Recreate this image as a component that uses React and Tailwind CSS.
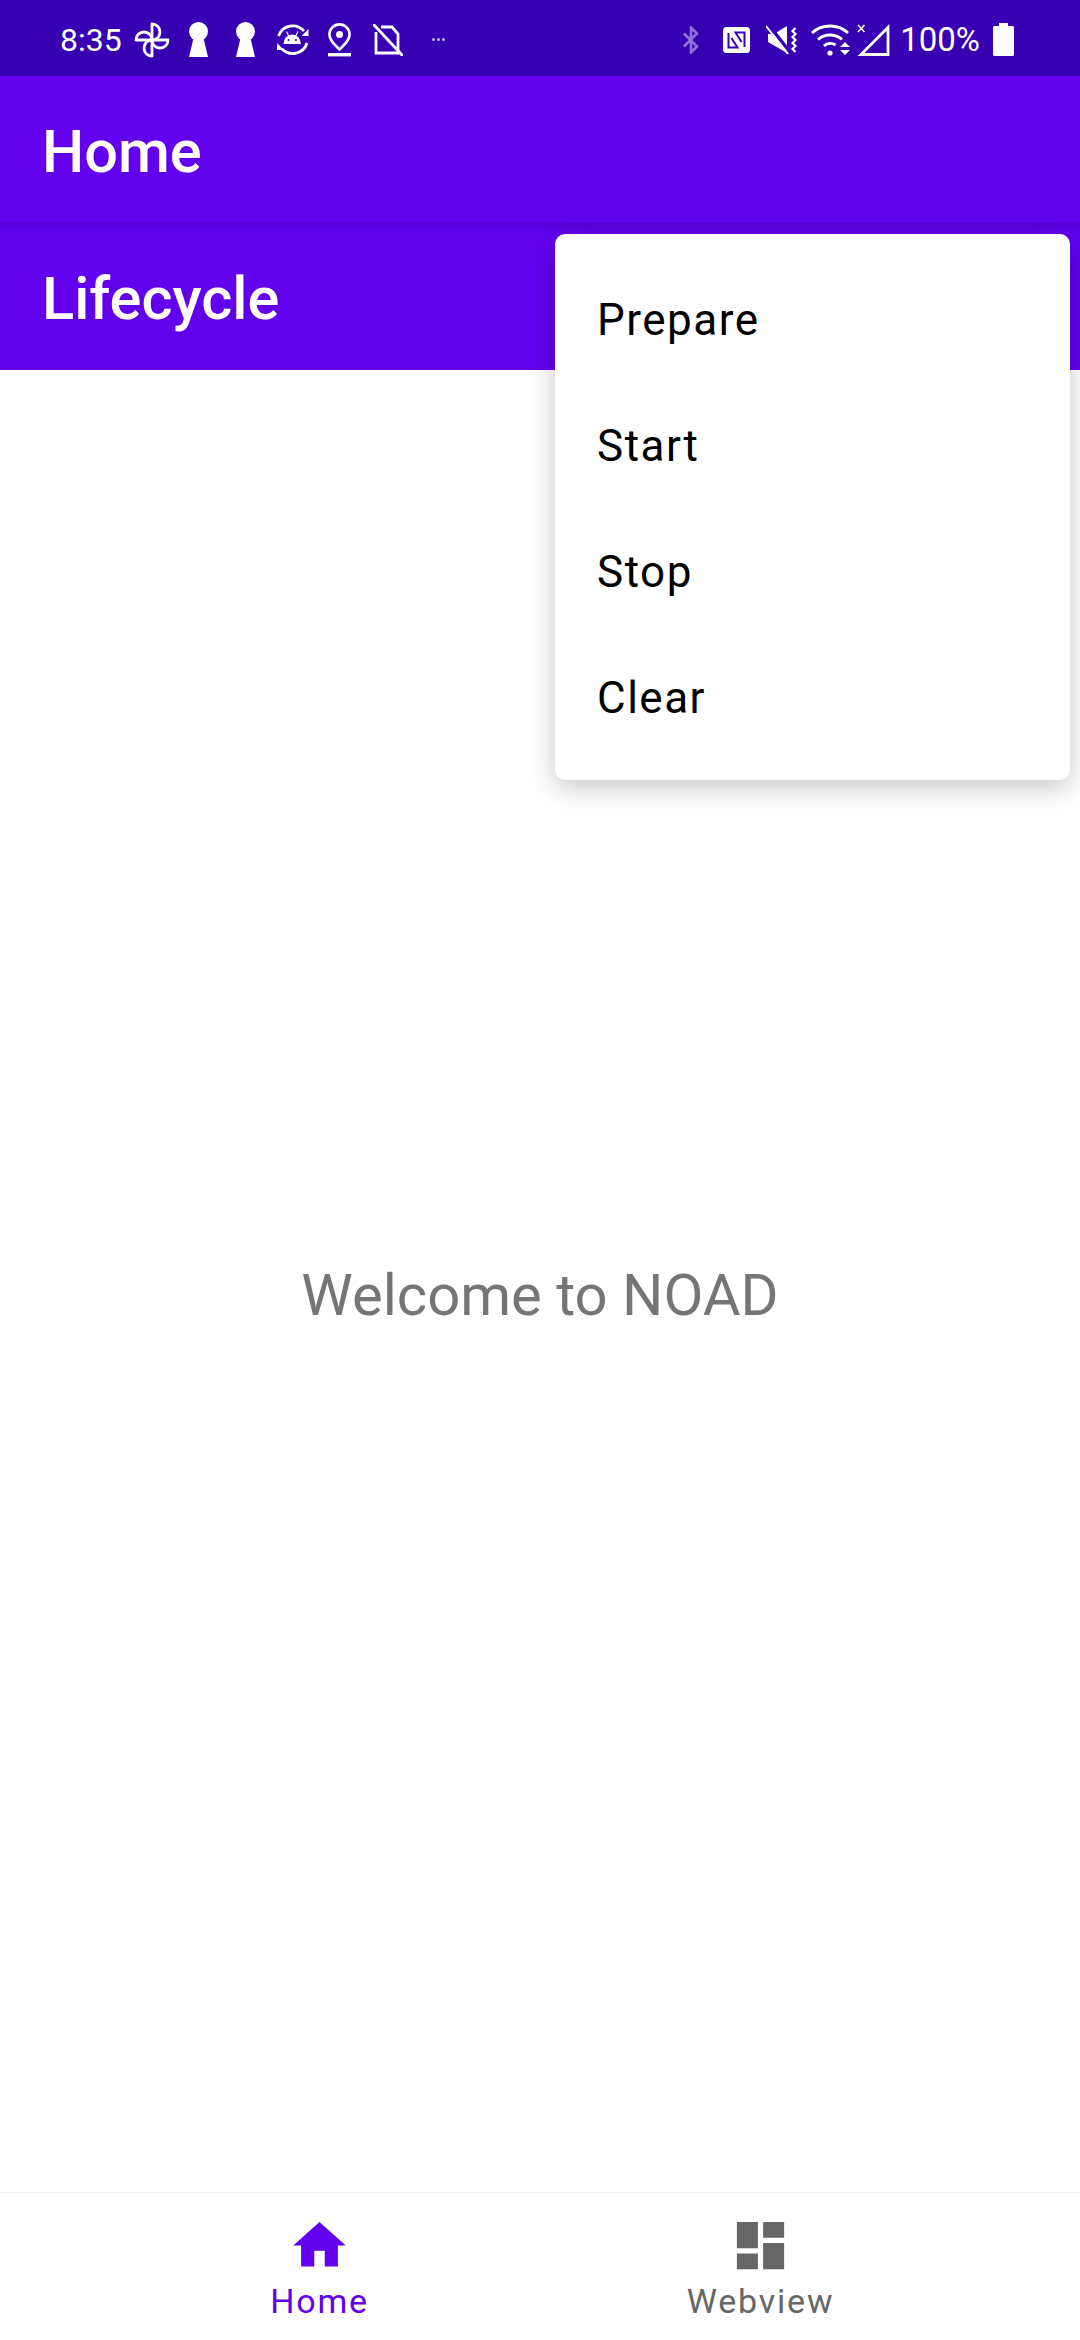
import React from 'react';

const roboto = "font-['Roboto',sans-serif]";

function Pinwheel() {
    return (
        <svg width="36" height="36" viewBox="0 0 36 36" fill="none" stroke="white" strokeWidth="2.8" strokeLinejoin="round">
            <path d="M18 18V2a8 8 0 0 1 0 16z" />
            <path d="M18 18h16a8 8 0 0 1-16 0z" />
            <path d="M18 18v16a8 8 0 0 1 0-16z" />
            <path d="M18 18H2a8 8 0 0 1 16 0z" />
        </svg>
    );
}

function Keyhole() {
    return (
        <svg width="19" height="35" viewBox="0 0 19 35" fill="white">
            <circle cx="9.5" cy="9.5" r="9.5" />
            <path d="M5 14h9l5 21H0z" />
        </svg>
    );
}

function AndroidSync() {
    return (
        <svg width="32" height="34" viewBox="0 0 32 34" fill="none">
            <path d="M1.500 13A15 15 0 0 1 27 8" stroke="white" strokeWidth="2.800" />
            <path d="M30 20A15 15 0 0 1 5 26" stroke="white" strokeWidth="2.800" />
            <path d="M31.500 6v7h-7zM0 20v7h7z" fill="white" />
            <path d="M6.500 21a8.700 9.500 0 0 1 17.400 0z" fill="white" />
            <path d="M9.500 8.500l2.500 5M21 8.500l-2.500 5" stroke="white" strokeWidth="1.200" />
            <circle cx="11.500" cy="17" r="1" fill="#3700B3" />
            <circle cx="19" cy="17" r="1" fill="#3700B3" />
        </svg>
    );
}

function PinOutline() {
    return (
        <svg width="23" height="34" viewBox="0 0 23 34" fill="none">
            <path d="M11.500 1.400a10.100 10.100 0 0 1 10.100 10.100c0 6-5.600 10.600-10.100 15c-4.500-4.400-10.100-9-10.100-15a10.100 10.100 0 0 1 10.100-10.100z" stroke="white" strokeWidth="2.600" />
            <circle cx="11.500" cy="11.500" r="3.500" fill="white" />
            <rect x="0" y="30" width="23" height="3.400" fill="white" />
        </svg>
    );
}

function NoSim() {
    return (
        <svg width="30" height="32" viewBox="0 0 30 32" fill="none" stroke="white" strokeWidth="2.800">
            <path d="M3 8v21h22V10l-6-7H8" />
            <path d="M1 1l28 30" strokeLinecap="round" />
        </svg>
    );
}

function Bluetooth() {
    return (
        <svg width="16" height="28" viewBox="0 0 16 28" fill="none" stroke="white" strokeOpacity="0.45" strokeWidth="2.600">
            <path d="M1 7.500l13 13L8 26.500V1.500l6 6-13 13" />
        </svg>
    );
}

function Nfc() {
    return (
        <svg width="27" height="26" viewBox="0 0 27 26" fill="none">
            <rect width="27" height="26" rx="3.500" fill="white" />
            <path d="M5.500 6V20.500H14.500L8.500 11" stroke="#3700B3" strokeWidth="2" />
            <path d="M21.500 20V5.500H12.500L18.500 15" stroke="#3700B3" strokeWidth="2" />
        </svg>
    );
}

function MuteVibrate() {
    return (
        <svg width="32" height="30" viewBox="0 0 32 30" fill="none">
            <path d="M2 9h6L21 1v27L2 17z" fill="white" />
            <path d="M1 -2l23 29" stroke="#3700B3" strokeWidth="3.500" />
            <path d="M0 1l22 28" stroke="white" strokeWidth="2" />
            <path d="M29.500 3l-3 3 3 3-3 3 3 3-3 3 3 3-3 3 3 3" stroke="white" strokeWidth="2.200" />
        </svg>
    );
}

function WifiUpDown() {
    return (
        <svg width="40" height="33" viewBox="0 0 40 33" fill="none" stroke="white" strokeWidth="3">
            <path d="M1 10a27 27 0 0 1 36 0" />
            <path d="M7 16.500a18 18 0 0 1 24 0" />
            <path d="M13 23a9.500 9.500 0 0 1 11.500-1" />
            <circle cx="19" cy="30" r="2.600" fill="white" stroke="none" />
            <path d="M29 24h10l-5-5zM29 27h10l-5 5z" fill="white" stroke="none" />
        </svg>
    );
}

function Signal() {
    return (
        <svg width="33" height="33" viewBox="0 0 33 33" fill="none" stroke="white">
            <path d="M31 4.500V31.500H4z" strokeWidth="2.800" />
            <path d="M1 2l6.500 7M7.500 2L1 9" strokeWidth="1.600" />
        </svg>
    );
}

function Battery() {
    return (
        <svg width="21" height="33" viewBox="0 0 21 33" fill="white">
            <path d="M6 0h9v3h4.500q1.500 0 1.500 1.500V31.500q0 1.500-1.500 1.500h-18Q0 33 0 31.500V4.500Q0 3 1.500 3H6z" />
        </svg>
    );
}

function StatusBar() {
    return (
        <div className={`flex h-[76px] items-center justify-between bg-[#3700B3] pt-[3px] text-white ${roboto}`}>
            <div className="flex items-center pl-[60px]">
                <span className="text-[32px] leading-none">8:35</span>
                <div className="ml-[12px] flex items-center">
                    <Pinwheel />
                </div>
                <div className="ml-[19px]"><Keyhole /></div>
                <div className="ml-[28px]"><Keyhole /></div>
                <div className="ml-[22px]"><AndroidSync /></div>
                <div className="ml-[19px]"><PinOutline /></div>
                <div className="ml-[22px]"><NoSim /></div>
                <div className="ml-[29px] flex gap-[2px] opacity-70">
                    <span className="h-[3px] w-[3px] rounded-full bg-white" />
                    <span className="h-[3px] w-[3px] rounded-full bg-white" />
                    <span className="h-[3px] w-[3px] rounded-full bg-white" />
                </div>
            </div>
            <div className="flex items-center pr-[66px]">
                <Bluetooth />
                <div className="ml-[24px]"><Nfc /></div>
                <div className="ml-[16px]"><MuteVibrate /></div>
                <div className="ml-[13px]"><WifiUpDown /></div>
                <div className="ml-[6px]"><Signal /></div>
                <span className="ml-[10px] text-[33px] leading-none">100%</span>
                <div className="ml-[13px]"><Battery /></div>
            </div>
        </div>
    );
}

function Toolbar({ title, shaded }) {
    return (
        <div className="relative flex h-[147px] items-center bg-[#6200EE] pl-[42px] pt-[6px]">
            {shaded && <div className="absolute inset-x-0 top-0 h-[10px] bg-gradient-to-b from-black/10 to-transparent" />}
            <span className={`text-[59.5px] font-medium leading-none text-white ${roboto}`}>{title}</span>
        </div>
    );
}

function Menu() {
    return (
        <div className={`absolute left-[555px] top-[234px] w-[515px] rounded-[10px] bg-white py-[21px] shadow-[0_8px_26px_rgba(0,0,0,0.22)] ${roboto}`}>
            {['Prepare', 'Start', 'Stop', 'Clear'].map((item) => (
                <div key={item} className="flex h-[126px] items-center pl-[42px] pt-[3px] text-[44px] tracking-[1.5px] text-black">
                    {item}
                </div>
            ))}
        </div>
    );
}

function BottomNav() {
    return (
        <div className={`flex h-[148px] justify-center border-t border-[#f1f1f1] bg-white ${roboto}`}>
            <div className="flex w-[441px] flex-col items-center pt-[21px]">
                <svg width="63" height="63" viewBox="0 0 24 24" fill="#6200EE">
                    <path d="M10 20v-6h4v6h5v-8h3L12 3 2 12h3v8z" />
                </svg>
                <span className="mt-[5px] text-[34px] leading-[38px] tracking-[1.8px] text-[#6200EE]">Home</span>
            </div>
            <div className="flex w-[441px] flex-col items-center pt-[21px]">
                <svg width="63" height="63" viewBox="0 0 24 24" fill="#666666">
                    <path d="M3 13h8V3H3v10zm0 8h8v-6H3v6zm10 0h8V11h-8v10zm0-18v6h8V3h-8z" />
                </svg>
                <span className="mt-[5px] text-[34px] leading-[38px] tracking-[1.8px] text-[#666666]">Webview</span>
            </div>
        </div>
    );
}

export default function App() {
    return (
        <div className="relative flex h-[2340px] w-[1080px] flex-col overflow-hidden bg-white">
            <StatusBar />
            <Toolbar title="Home" />
            <Toolbar title="Lifecycle" shaded />
            <div className="flex flex-1 items-center justify-center pt-[27px]">
                <span className={`text-[58px] leading-none text-[#757575] ${roboto}`}>Welcome to NOAD</span>
            </div>
            <BottomNav />
            <Menu />
        </div>
    );
}
